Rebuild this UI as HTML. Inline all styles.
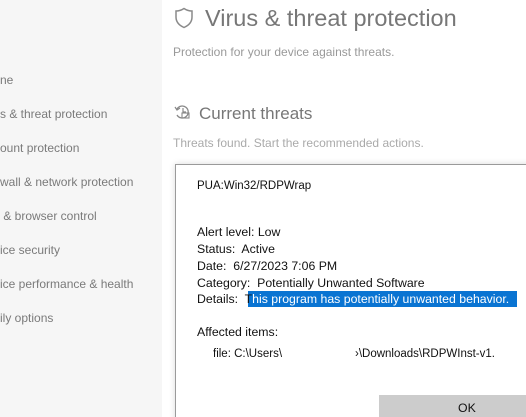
<!DOCTYPE html>
<html style="overflow:hidden;height:417px"><head><meta charset="utf-8"><style>
body{margin:0;width:526px;height:417px;overflow:hidden;background:#fff;font-family:"Liberation Sans",sans-serif;position:relative}
.side{position:absolute;left:0;top:0;width:162px;height:417px;background:#f6f6f6}
.nav{position:absolute;left:0;font-size:12px;color:#7a7a7a;white-space:nowrap}
.t{position:absolute;white-space:nowrap}
.dlg{position:absolute;left:175px;top:164px;width:360px;height:260px;background:#fff;border:1px solid #9a9a9a;box-shadow:0 0 6px rgba(0,0,0,.15)}
.d{position:absolute;font-size:12.3px;color:#111;white-space:nowrap}
</style></head><body>
<div class="side"></div>
<div class="nav" style="top:73px">ne</div>
<div class="nav" style="top:107px">s &amp; threat protection</div>
<div class="nav" style="top:141px">ount protection</div>
<div class="nav" style="top:175px">wall &amp; network protection</div>
<div class="nav" style="top:209px">&nbsp;&amp; browser control</div>
<div class="nav" style="top:243px">ice security</div>
<div class="nav" style="top:277px">ice performance &amp; health</div>
<div class="nav" style="top:311px">ily options</div>

<svg style="position:absolute;left:174px;top:7px" width="20" height="22" viewBox="0 0 20 22"><path d="M10 1.5 C7 3.5 4.5 4 2 4 V10 C2 15 5.5 18.5 10 20.5 C14.5 18.5 18 15 18 10 V4 C15.5 4 13 3.5 10 1.5Z" fill="none" stroke="#8a8a8a" stroke-width="1.5"/></svg>
<div class="t" style="left:205px;top:5px;font-size:23.5px;color:#777">Virus &amp; threat protection</div>
<div class="t" style="left:173px;top:45px;font-size:12px;color:#999">Protection for your device against threats.</div>
<svg style="position:absolute;left:174px;top:104px" width="18" height="16" viewBox="0 0 18 16"><path d="M3 5 A6 6 0 1 1 3 11" fill="none" stroke="#888" stroke-width="1.3"/><path d="M1 3 L3 6 L6 4" fill="none" stroke="#888" stroke-width="1.2"/><path d="M9 4 V8 H12" fill="none" stroke="#888" stroke-width="1.2"/><rect x="8" y="9" width="7" height="5" fill="none" stroke="#888" stroke-width="1.1"/></svg>
<div class="t" style="left:199px;top:104px;font-size:17px;color:#777">Current threats</div>
<div class="t" style="left:173px;top:136px;font-size:12px;color:#aaa">Threats found. Start the recommended actions.</div>

<div class="dlg"></div>
<div class="d" style="left:197px;top:180px;font-size:11.5px">PUA:Win32/RDPWrap</div>
<div class="d" style="left:197px;top:225px">Alert level: Low</div>
<div class="d" style="left:197px;top:242px">Status:&nbsp; Active</div>
<div class="d" style="left:197px;top:259px">Date:&nbsp; 6/27/2023 7:06 PM</div>
<div class="d" style="left:197px;top:276px">Category:&nbsp; Potentially Unwanted Software</div>
<div style="position:absolute;left:248px;top:291px;width:269px;height:16px;background:#0a74d2"></div>
<div class="d" style="left:197px;top:292px">Details:&nbsp; T<span style="color:#fff">his program has potentially unwanted behavior.</span></div>
<div class="d" style="left:197px;top:325px">Affected items:</div>
<div class="d" style="left:213px;top:348px;font-size:11.5px">file: C:\Users\</div>
<div class="d" style="left:355px;top:348px;font-size:11.5px">›\Downloads\RDPWInst-v1.</div>
<div style="position:absolute;left:379px;top:395px;width:150px;height:24px;background:#cccccc"></div>
<div class="d" style="left:458px;top:401px">OK</div>
</body></html>
